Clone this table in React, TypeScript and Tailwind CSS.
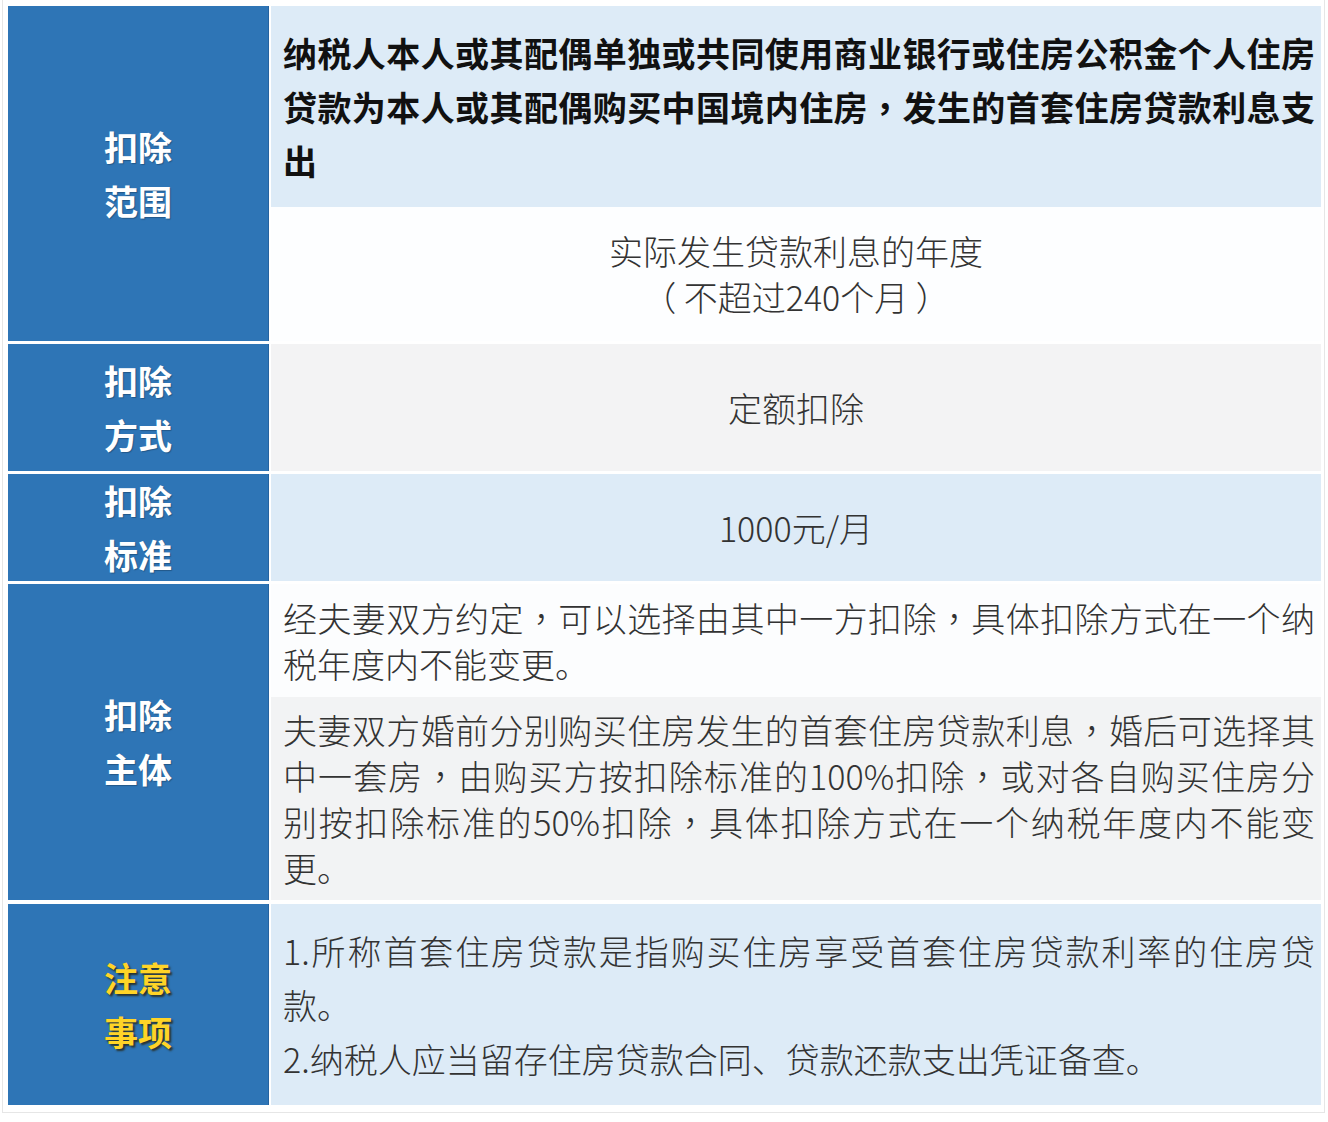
import React from "react";

const cjk = "font-['Microsoft_YaHei','Noto_Sans_CJK_SC',sans-serif]";

/**
 * Label cell on the left (blue column)
 */
const Label = ({ lines, warn = false }: { lines: string[]; warn?: boolean }) => (
  <div className="flex w-[261px] shrink-0 items-center justify-center border-r border-[#2563a0] bg-[#2e75b6]">
    <div
      className={
        warn
          ? "text-center text-[34px] leading-[54px] font-bold text-[#ffd427] [text-shadow:2px_2px_2px_rgba(40,30,0,0.75)]"
          : "text-center text-[34px] leading-[54px] font-bold text-white [text-shadow:1px_1px_1px_rgba(0,0,0,0.25)]"
      }
    >
      {lines.map((l) => (
        <div key={l}>{l}</div>
      ))}
    </div>
  </div>
);

// full-width commas sit centred in the original, TC font does that
const T = ({ text }: { text: string }) => (
  <>
    {text.split("，").map((part, i) => (
      <React.Fragment key={i}>
        {i > 0 && <span className="font-['Noto_Sans_CJK_TC',sans-serif]">，</span>}
        {part}
      </React.Fragment>
    ))}
  </>
);

export default function App() {
  return (
    <div className={`h-[1122px] w-[1328px] bg-white ${cjk}`}>
      <div className="ml-[2px] w-[1323px] border-r border-b border-l border-[#e6e6e6] pt-[6px] pr-[3px] pb-[7px] pl-[5px]">
        <div className="flex flex-col gap-[3px]">
          {/* 扣除范围 */}
          <div className="flex h-[335px] gap-[2px]">
            <Label lines={["扣除", "范围"]} />
            <div className="flex flex-1 flex-col">
              <div className="flex h-[201px] items-center bg-[#ddebf7] pr-[6px] pl-[12px]">
                <p className="text-justify text-[34px] leading-[54px] font-bold text-[#111]">
                  <T text="纳税人本人或其配偶单独或共同使用商业银行或住房公积金个人住房贷款为本人或其配偶购买中国境内住房，发生的首套住房贷款利息支出" />
                </p>
              </div>
              <div className="flex flex-1 items-center justify-center bg-[#fdfeff]">
                <p className="text-center text-[34px] leading-[46px] font-light text-[#333]">
                  实际发生贷款利息的年度
                  <br />（ 不超过240个月 ）
                </p>
              </div>
            </div>
          </div>

          {/* 扣除方式 */}
          <div className="flex h-[127px] gap-[2px]">
            <Label lines={["扣除", "方式"]} />
            <div className="flex flex-1 items-center justify-center bg-[#f3f3f4]">
              <p className="text-[34px] leading-[46px] font-light text-[#333]">定额扣除</p>
            </div>
          </div>

          {/* 扣除标准 */}
          <div className="flex h-[107px] gap-[2px]">
            <Label lines={["扣除", "标准"]} />
            <div className="flex flex-1 items-center justify-center bg-[#ddebf7]">
              <p className="text-[34px] leading-[46px] font-light text-[#333]">1000元/月</p>
            </div>
          </div>

          {/* 扣除主体 */}
          <div className="flex h-[316px] gap-[2px]">
            <Label lines={["扣除", "主体"]} />
            <div className="flex flex-1 flex-col">
              <div className="flex h-[113px] items-center bg-[#fcfdfe] pr-[6px] pl-[12px]">
                <p className="text-justify text-[34px] leading-[46px] font-light text-[#333]">
                  <T text="经夫妻双方约定，可以选择由其中一方扣除，具体扣除方式在一个纳税年度内不能变更。" />
                </p>
              </div>
              <div className="flex flex-1 items-center bg-[#f2f3f4] pr-[6px] pl-[12px]">
                <p className="text-justify text-[34px] leading-[46px] font-light text-[#333]">
                  <T text="夫妻双方婚前分别购买住房发生的首套住房贷款利息，婚后可选择其中一套房，由购买方按扣除标准的100%扣除，或对各自购买住房分别按扣除标准的50%扣除，具体扣除方式在一个纳税年度内不能变更。" />
                </p>
              </div>
            </div>
          </div>

          {/* 注意事项 */}
          <div className="mt-[1px] flex h-[201px] gap-[2px]">
            <Label lines={["注意", "事项"]} warn />
            <div className="flex flex-1 items-center bg-[#ddebf7] pr-[6px] pl-[12px]">
              <div className="w-full text-[34px] leading-[54px] font-light text-[#333]">
                <p className="text-justify [text-align-last:justify]">
                  1.所称首套住房贷款是指购买住房享受首套住房贷款利率的住房贷
                </p>
                <p>款。</p>
                <p>2.纳税人应当留存住房贷款合同、贷款还款支出凭证备查。</p>
              </div>
            </div>
          </div>
        </div>
      </div>
    </div>
  );
}
